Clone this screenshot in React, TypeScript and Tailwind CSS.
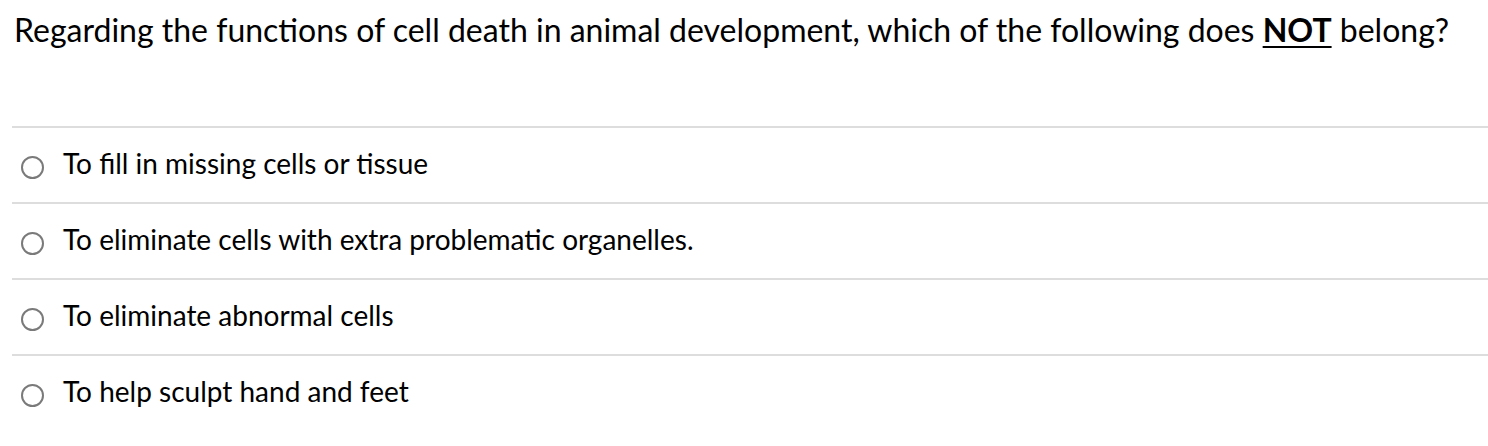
import React from "react";

const options = [
  "To fill in missing cells or tissue",
  "To eliminate cells with extra problematic organelles.",
  "To eliminate abnormal cells",
  "To help sculpt hand and feet",
];

export default function App() {
  return (
    <div className="w-[1488px] h-[446px] bg-white text-black overflow-hidden" style={{ fontFamily: "Lato, 'Open Sans', sans-serif" }}>
      <div className="pl-[14px] pt-[10px] h-[126px] text-[32px] leading-[40px]">
        Regarding the functions of cell death in animal development, which of the following does{" "}
        <span className="font-bold underline underline-offset-[4px] decoration-[2px]">NOT</span> belong?
      </div>
      <div className="ml-[12px]">
        {options.map((o, i) => (
          <div key={i} className="border-t-2 border-[#dddddd] h-[76px] flex items-center">
            <div className="ml-[9px] mt-[5px] w-[23px] h-[23px] rounded-full border-2 border-[#7a7a7a] shrink-0" />
            <div className="ml-[19px] -mt-[5px] text-[28px] leading-[34px]">{o}</div>
          </div>
        ))}
      </div>
    </div>
  );
}
